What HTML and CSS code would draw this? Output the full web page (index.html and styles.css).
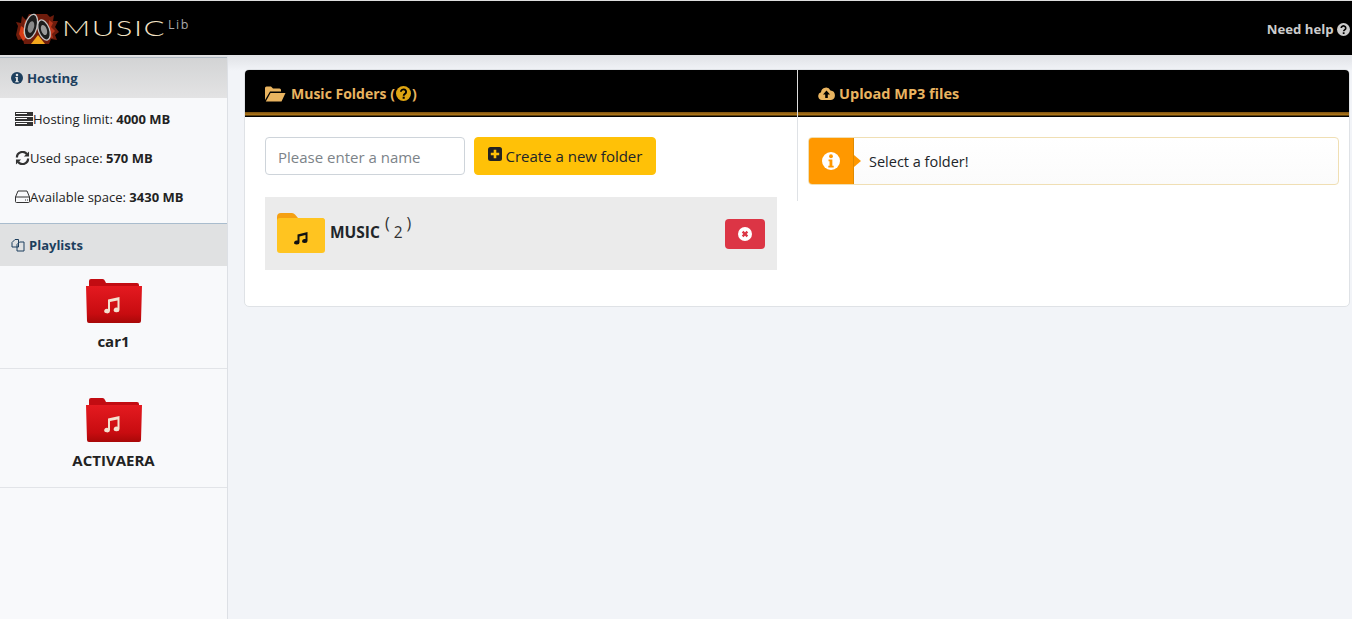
FILE: index.html
```html
<!DOCTYPE html>
<html lang="en">
<head>
  <meta charset="UTF-8" />
  <title>Music Lib</title>
  <link rel="stylesheet" href="styles.css">
</head>
<body>
  <header class="topbar">
    <div class="logo">
      <svg class="logo-mark" width="44" height="32" viewBox="0 0 44 32">
        <path d="M1 22 L3 13 L1 9 L6 10 L7 3 L11 7 L14 1 L32 1 L35 4 L39 2 L38 8 L43 8 L40 14 L44 19 L40 22 L42 27 L36 26 L34 31 L9 31 L8 26 L3 27 Z" fill="#6e1c0c"/>
        <path d="M4 21 L6 13 L9 15 L10 7 L13 12 L12 24 L8 28 Z" fill="#d63c16"/>
        <path d="M34 7 L38 10 L36 14 L40 18 L37 21 L38 25 L33 24 Z" fill="#b8341a"/>
        <path d="M8 20 L10 15 L11 24 Z" fill="#f08020"/>
        <path d="M16 31 L23 22 L30 31 Z" fill="#f4a81e"/>
        <ellipse cx="16" cy="13.500" rx="6" ry="12.500" transform="rotate(15 16 13.500)" fill="#1c1c1c" stroke="#c4c4c4" stroke-width="1.300"/>
        <ellipse cx="16" cy="14" rx="3" ry="6" transform="rotate(15 16 14)" fill="#8a8a8a"/>
        <ellipse cx="29" cy="17" rx="5.500" ry="10.500" transform="rotate(-20 29 17)" fill="#1c1c1c" stroke="#c4c4c4" stroke-width="1.300"/>
        <ellipse cx="29" cy="17" rx="2.800" ry="5.200" transform="rotate(-20 29 17)" fill="#9a9a9a"/>
      </svg>
      <span class="logo-name">MUSIC</span>
      <span class="logo-sub">Lib</span>
    </div>
    <a class="help-link">Need help
      <svg class="icon" width="13" height="13" viewBox="0 0 16 16"><circle cx="8" cy="8" r="8" fill="currentColor"/><path d="M5.200 6.200a2.800 2.600 0 1 1 4.300 2.200c-.9.600-1.300 1-1.300 1.900" fill="none" stroke="#000" stroke-width="2"/><rect x="7.100" y="11.400" width="2.200" height="2.200" fill="#000"/></svg>
    </a>
  </header>

  <div class="layout">
    <aside class="sidebar">
      <h3 class="side-title side-title-first">
        <svg class="icon" width="12" height="12" viewBox="0 0 16 16"><circle cx="8" cy="8" r="8" fill="#1d3f5e"/><circle cx="8" cy="4" r="1.700" fill="#e0e1e2"/><path d="M5.800 6.600h3.400v5.600h1.200v1.600H5.600v-1.600h1.100V8.200H5.800z" fill="#e0e1e2"/></svg>
        Hosting
      </h3>
      <ul class="stats">
        <li>
          <svg class="icon" width="18" height="14" viewBox="0 0 18 14"><g fill="#333"><rect y="0" width="18" height="4"/><rect y="5" width="18" height="4"/><rect y="10" width="18" height="4"/></g><g fill="#fff"><rect x="1" y="1" width="11" height="1"/><rect x="1" y="6" width="11" height="1"/><rect x="1" y="11" width="11" height="1"/></g></svg>Hosting limit: <b>4000 MB</b>
        </li>
        <li>
          <svg class="icon" width="15" height="14" viewBox="0 0 16 15"><path d="M2 7A6 6 0 0 1 12.600 3.200M14 8A6 6 0 0 1 3.400 11.800" fill="none" stroke="#333" stroke-width="2.400"/><path d="M15 0.500v5.500h-5.500zM1 14.500V9h5.500z" fill="#333"/></svg>Used space: <b>570 MB</b>
        </li>
        <li>
          <svg class="icon" width="15" height="13" viewBox="0 0 15 13"><path d="M3 1h9l2.500 6v4.500a1 1 0 0 1-1 1h-12a1 1 0 0 1-1-1V7zM.5 7h14" fill="none" stroke="#333"/><path d="M10 10h1M12 10h1" stroke="#333"/></svg>Available space: <b>3430 MB</b>
        </li>
      </ul>
      <h3 class="side-title side-title-second">
        <svg class="icon" width="14" height="14" viewBox="0 0 14 14"><path d="M1 4.500l3-3h3.500v7.500H1zM6 6.500l2.500-2.500h4.500v9H6z" fill="#e0e1e2" stroke="#1d3f5e"/></svg>
        Playlists
      </h3>
      <div class="playlist playlist-first">
        <svg width="56" height="46" viewBox="0 0 56 46"><use href="#red-folder"/></svg>
        <span>car1</span>
      </div>
      <div class="playlist playlist-next">
        <svg width="56" height="46" viewBox="0 0 56 46"><use href="#red-folder"/></svg>
        <span>ACTIVAERA</span>
      </div>
    </aside>

    <main class="content">
      <div class="card">
        <section class="col col-folders">
          <h2 class="col-head">
            <svg class="icon head-folder" width="21" height="16" viewBox="0 0 21 16"><path d="M0 14V2a1.500 1.500 0 0 1 1.500-1.500h4.500l2 2h6.500a1.500 1.500 0 0 1 1.500 1.500v1.500H5L0 14z" fill="#e9b460"/><path d="M5.500 7H20.500L16.500 15.500H.8z" fill="#e9b460"/></svg>
            Music Folders (<svg class="icon head-help" width="15" height="15" viewBox="0 0 16 16"><circle cx="8" cy="8" r="8" fill="#dfa512"/><path d="M5.200 6.200a2.800 2.600 0 1 1 4.300 2.200c-.9.600-1.300 1-1.300 1.900" fill="none" stroke="#000" stroke-width="2"/><rect x="7.100" y="11.400" width="2.200" height="2.200" fill="#000"/></svg>)
          </h2>
          <div class="col-body">
            <form class="new-folder">
              <input class="name-input" type="text" placeholder="Please enter a name">
              <button class="btn-create" type="button">
                <svg class="btn-icon" width="14" height="14" viewBox="0 0 14 14"><rect width="14" height="14" rx="2.500" fill="#222"/><path d="M5.700 2.800h2.600v2.900h2.900v2.600H8.300v2.900H5.700V8.300H2.800V5.700h2.900z" fill="#ffc107"/></svg>
                Create a new folder
              </button>
            </form>
            <div class="folder-row">
              <svg class="yellow-folder" width="48" height="40" viewBox="0 0 48 40"><path d="M0 8V4a4 4 0 0 1 4-4h11a4 4 0 0 1 3 1.500L21 5h23a4 4 0 0 1 4 4v4H0z" fill="#f5a012"/><rect y="5" width="48" height="35" rx="3" fill="#ffc420"/><path d="M20.500 21.500l10-2.500v9a2.700 2 0 1 1-2-1.900V22l-6 1.500v6a2.700 2 0 1 1-2-1.900z" fill="#111"/></svg>
              <span class="folder-name">MUSIC</span>
              <span class="folder-count"><span class="paren">(</span> 2 <span class="paren">)</span></span>
              <button class="btn-delete" type="button">
                <svg width="14" height="14" viewBox="0 0 14 14"><circle cx="7" cy="7" r="7" fill="#fff"/><path d="M4.600 4.600l4.800 4.800M9.400 4.600l-4.800 4.800" stroke="#dc3545" stroke-width="2.200"/></svg>
              </button>
            </div>
          </div>
        </section>

        <section class="col col-upload">
          <h2 class="col-head">
            <svg class="icon" width="17" height="13" viewBox="0 0 17 13"><path d="M4 13a4 4 0 0 1-1-7.800A5 5 0 0 1 12.500 3.500 4.800 4.800 0 0 1 13 13z" fill="#e9b460"/><path d="M8.500 3.500L12 7.500H9.800V11H7.200V7.500H5z" fill="#000"/></svg>
            Upload MP3 files
          </h2>
          <div class="col-body col-body-upload">
            <div class="notice">
              <div class="notice-icon">
                <svg width="18" height="18" viewBox="0 0 16 16"><circle cx="8" cy="8" r="8" fill="#fff"/><circle cx="8" cy="3.800" r="1.700" fill="#ff9800"/><path d="M5.800 6.600h3.400v5.600h1.200v1.600H5.600v-1.600h1.100V8.200H5.800z" fill="#ff9800"/></svg>
              </div>
              <span class="notice-text">Select a folder!</span>
            </div>
          </div>
        </section>
      </div>
    </main>
  </div>

  <svg class="defs" width="0" height="0">
    <defs>
      <linearGradient id="red-body" x1="0" y1="0" x2="0" y2="1">
        <stop offset="0" stop-color="#e41a20"/>
        <stop offset="0.750" stop-color="#c80c10"/>
        <stop offset="1" stop-color="#a80808"/>
      </linearGradient>
      <g id="red-folder">
        <path d="M3 7V2a2 2 0 0 1 2-2h11a3 3 0 0 1 3 2l1 2h31a2 2 0 0 1 2 2v3H3z" fill="#c20c12"/>
        <path d="M0 7h56l-1 35a2 2 0 0 1-2 2H3a2 2 0 0 1-2-2z" fill="url(#red-body)"/>
        <path d="M22 20.500l11.500-2.500v13a2.900 2.300 0 1 1-2-2.200V21.500l-7.500 1.600v9a2.900 2.300 0 1 1-2-2.200z" fill="#f4e2d0"/>
      </g>
    </defs>
  </svg>
</body>
</html>
```

FILE: styles.css
```css
* {
  box-sizing: border-box;
}
body {
  margin: 0;
  height: 619px;
  overflow: hidden;
  background: #f2f4f8;
  font-family: "Open Sans", "Noto Sans", sans-serif;
  font-size: 14px;
  color: #222;
}
.icon {
  vertical-align: -2px;
}
.defs {
  position: absolute;
}
.topbar {
  height: 55px;
  background: #000;
  border-top: 1px solid #ddd;
  display: flex;
  align-items: center;
  justify-content: space-between;
}
.logo {
  display: flex;
  align-items: center;
  padding-left: 15px;
}
.logo-mark {
  margin-top: 1px;
}
.logo-name {
  margin: 0 0 1px 3px;
  width: 106px;
  font-family: "Lato", sans-serif;
  font-size: 21px;
  font-weight: 300;
  letter-spacing: 1px;
  color: #f4e4c6;
  transform: scaleX(1.480);
  transform-origin: left;
}
.logo-sub {
  margin-top: -8px;
  font-size: 12.500px;
  letter-spacing: 1.500px;
  color: #aaa;
}
.help-link {
  margin-top: 1px;
  padding-right: 2px;
  font-size: 13.200px;
  font-weight: 700;
  color: #ccc;
}
.layout {
  display: flex;
  height: 564px;
}
.sidebar {
  width: 228px;
  background: #f8f9fb;
  border-right: 1px solid #dde0e5;
}
.side-title {
  margin: 0;
  height: 43px;
  padding: 0 11px;
  display: flex;
  align-items: center;
  gap: 4px;
  font-size: 13.200px;
  font-weight: 700;
  color: #1d3f5e;
  background: #e0e1e2;
}
.side-title-first {
  padding-top: 2px;
  background: linear-gradient(#dfe0e2 0, #dfe0e2 2px, #aeb8c2 2px, #aeb8c2 3px, #d3d4d5 3px, #e3e3e4 100%);
}
.side-title-second {
  font-size: 13px;
  border-top: 1px solid #a9bccd;
}
.stats {
  list-style: none;
  margin: 0;
  padding: 1px 0 7px 15px;
  font-size: 13px;
}
.stats li {
  height: 39px;
  display: flex;
  align-items: center;
  white-space: pre;
}
.stats b {
  color: #222;
}
.playlist {
  display: flex;
  flex-direction: column;
  align-items: center;
  gap: 6px;
  font-size: 15px;
  line-height: 20px;
  font-weight: 700;
  color: #222;
  border-bottom: 1px solid #e2e4e8;
}
.playlist-first {
  height: 103px;
  padding-top: 13px;
}
.playlist-next {
  height: 119px;
  padding-top: 29px;
}
.content {
  flex: 1;
  padding: 14px 2px 0 16px;
  background: linear-gradient(#e0e2e6, #f2f4f8 16px);
}
.card {
  height: 238px;
  display: flex;
  background: #fff;
  border: 1px solid #dfe2e6;
  border-radius: 5px;
}
.col-folders {
  width: 552px;
}
.col-upload {
  flex: 1;
}
.col-head {
  margin: 0;
  height: 47px;
  padding: 0 20px;
  display: flex;
  align-items: center;
  gap: 4px;
  font-size: 14px;
  font-weight: 700;
  color: #e9b460;
  background: linear-gradient(#000 0, #000 42px, #7a5010 42px, #b57c1c 45px, #000 46px);
}
.col-folders .col-head {
  gap: 0;
  border-radius: 4px 0 0 0;
}
.head-folder {
  margin-right: 5px;
}
.head-help {
  margin: 0 1px;
}
.col-upload .col-head {
  font-size: 14.500px;
  border-left: 1px solid #ddd;
  border-radius: 0 4px 0 0;
}
.col-body {
  padding: 20px 20px 0;
}
.col-body-upload {
  height: 84px;
  padding: 20px 10px 0 10px;
  border-left: 1px solid #dfe2e6;
}
.new-folder {
  display: flex;
  gap: 9px;
  height: 38px;
}
.name-input {
  width: 200px;
  height: 38px;
  padding: 2px 12px 0;
  border: 1px solid #ced4da;
  border-radius: 4px;
  font-family: inherit;
  font-size: 15px;
  color: #495057;
}
.name-input::placeholder {
  color: #7c8389;
  opacity: 1;
}
.btn-create {
  height: 38px;
  width: 182px;
  padding: 0;
  background: #ffc107;
  border: 1px solid #ffc107;
  border-radius: 4px;
  font-family: inherit;
  font-size: 15px;
  color: #212529;
}
.btn-icon {
  vertical-align: 1px;
}
.folder-row {
  margin-top: 22px;
  width: 512px;
  height: 73px;
  padding: 0 12px;
  display: flex;
  align-items: center;
  background: #ebebeb;
}
.yellow-folder {
  margin-top: -2px;
}
.folder-name {
  margin: -3px 5px 0 5px;
  font-size: 15.500px;
  font-weight: 700;
  color: #212529;
}
.folder-count {
  margin-top: -3px;
  font-size: 15.500px;
  color: #333;
  white-space: pre;
}
.paren {
  display: inline-block;
  font-size: 16px;
  transform: translateY(-9px);
}
.btn-delete {
  margin: 1px 0 0 auto;
  width: 40px;
  height: 30px;
  padding: 0;
  display: flex;
  align-items: center;
  justify-content: center;
  background: #dc3545;
  border: none;
  border-radius: 4px;
}
.notice {
  height: 48px;
  display: flex;
  align-items: center;
  background: linear-gradient(#fff, #fbfbfb);
  border: 1px solid #f0dfb4;
  border-radius: 4px;
}
.notice-icon {
  position: relative;
  width: 45px;
  height: 46px;
  display: flex;
  align-items: center;
  justify-content: center;
  background: #ff9800;
  border-right: 1px solid #e08a00;
  border-radius: 3px 0 0 3px;
}
.notice-icon::after {
  content: "";
  position: absolute;
  right: -8px;
  top: 17px;
  border-left: 7px solid #ff9800;
  border-top: 6px solid transparent;
  border-bottom: 6px solid transparent;
}
.notice-text {
  margin-left: 15px;
  font-size: 14.500px;
  color: #212529;
}
```
